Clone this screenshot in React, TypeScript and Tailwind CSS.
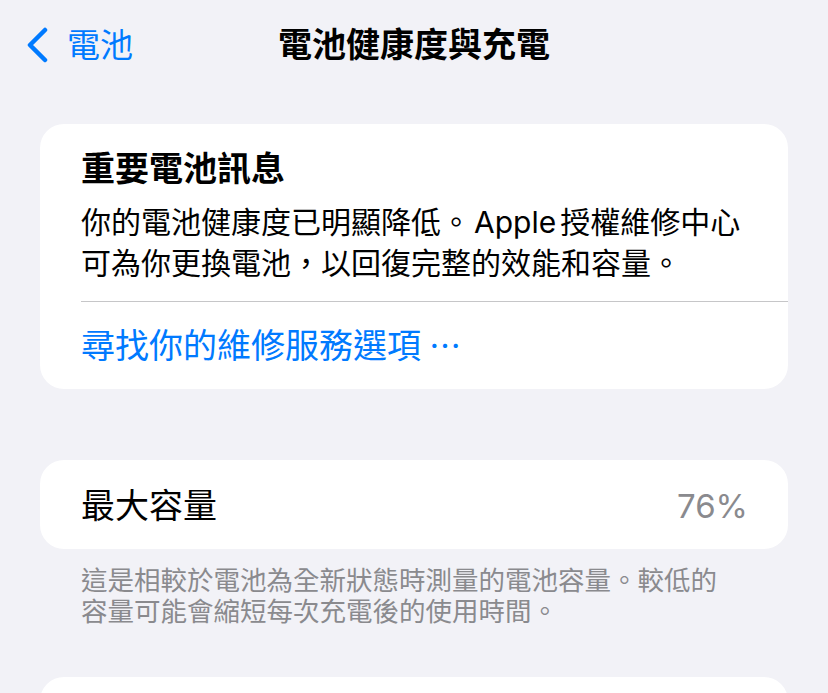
import React from "react";

const font = { fontFamily: '"Inter", "Noto Sans CJK TC", sans-serif' };

const BackChevron = () => (
    <svg width="22" height="36" viewBox="0 0 22 36" fill="none">
        <path
            d="M19 3 L4 18 L19 33"
            stroke="#007aff"
            strokeWidth="4.5"
            strokeLinecap="round"
            strokeLinejoin="round"
        />
    </svg>
);

const Header = () => (
    <header className="h-[90px] grid grid-cols-[1fr_auto_1fr] items-center">
        <div className="flex items-center pl-[26px]">
            <BackChevron />
            <span className="ml-[19px] text-[33px] leading-none text-[#007aff]">電池</span>
        </div>
        <h1 className="text-[34px] leading-none font-semibold text-black">電池健康度與充電</h1>
        <div />
    </header>
);

export default function App() {
    return (
        <div
            className="h-[693px] overflow-hidden bg-[#f2f2f7] antialiased"
            style={font}
        >
            <Header />

            <main className="px-[40px] pt-[34px]">
                {/*important message*/}
                <section className="bg-white rounded-[24px]">
                    <div className="px-[41px] pt-[24px]">
                        <h2 className="text-[34px] leading-[41px] font-semibold text-black">
                            重要電池訊息
                        </h2>
                        <p className="mt-[13px] text-[30px] leading-[41px] text-black whitespace-nowrap">
                            你的電池健康度已明顯降低。<span className="ml-[3px] mr-[4px]">Apple</span>授權維修中心
                            <br />
                            可為你更換電池，以回復完整的效能和容量。
                        </p>
                    </div>
                    <div className="ml-[41px] mt-[17px] h-px bg-[#c6c6c8]" />
                    <div className="h-[87px] flex items-center px-[41px]">
                        <span className="text-[34px] leading-none text-[#007aff]">
                            尋找你的維修服務選項
                            <span
                                className="ml-[8px] text-[32px]"
                                style={{ fontFamily: '"Noto Sans CJK TC", sans-serif' }}
                            >
                                ⋯
                            </span>
                        </span>
                    </div>
                </section>

                {/*max capacity*/}
                <section className="mt-[71px] h-[89px] bg-white rounded-[24px] flex items-center justify-between pl-[41px] pr-[40px] pt-[3px]">
                    <span className="text-[34px] leading-none text-black">最大容量</span>
                    <span className="text-[33px] leading-none text-[#8a8a8e]">76%</span>
                </section>
                <p className="mt-[16px] px-[41px] text-[26.5px] leading-[31px] text-[#8a8a8e] whitespace-nowrap">
                    這是相較於電池為全新狀態時測量的電池容量。較低的
                    <br />
                    容量可能會縮短每次充電後的使用時間。
                </p>

                {/*next card*/}
                <section className="mt-[50px] h-[120px] bg-white rounded-[24px]" />
            </main>
        </div>
    );
}
